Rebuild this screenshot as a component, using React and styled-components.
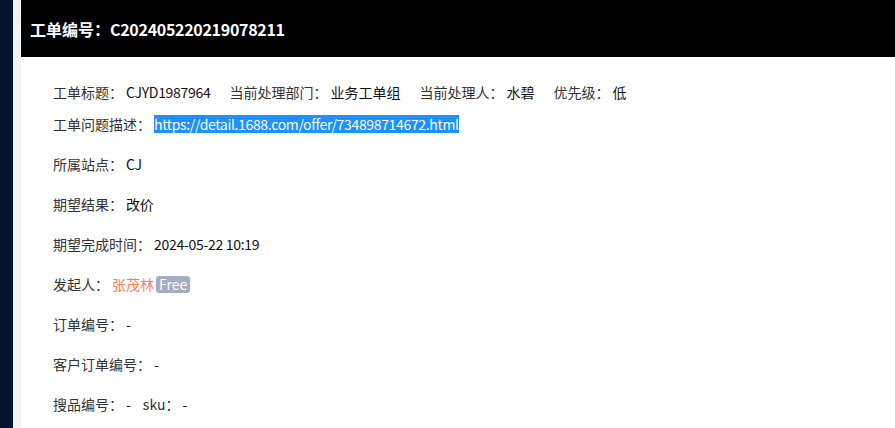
import React from 'react';
import styled, { createGlobalStyle } from 'styled-components';

const GlobalStyle = createGlobalStyle`
  html, body {
    margin: 0;
    padding: 0;
    height: 100%;
    overflow: hidden;
  }
  body {
    font-family: "Noto Sans CJK SC", "Noto Sans", sans-serif;
    font-size: 14px;
    color: #333;
  }
`;

const Layout = styled.div`
  display: flex;
  height: 100vh;
`;

const Sider = styled.div`
  width: 13px;
  flex-shrink: 0;
  background: #001529;
`;

const Main = styled.div`
  flex: 1;
  background: #f0f2f5;
  padding-left: 8px;
  display: flex;
  flex-direction: column;
`;

const Card = styled.div`
  flex: 1;
  background: #fff;
  display: flex;
  flex-direction: column;
`;

const Header = styled.div`
  height: 57px;
  background: #000;
  color: #fff;
  display: flex;
  align-items: center;
  padding-left: 9px;
  box-sizing: border-box;
  font-size: 16px;
  font-weight: 700;
`;

const Code = styled.span`
  letter-spacing: -0.3px;
`;

const Body = styled.div`
  padding: 24px 32px 0;
`;

const Row = styled.div`
  display: flex;
  align-items: center;
  height: 22px;
  line-height: 22px;
  margin-bottom: ${p => p.$gap}px;
  white-space: nowrap;
`;

const Item = styled.span`
  display: inline-flex;
  align-items: center;
  margin-right: ${p => p.$spacing || 0}px;
`;

const Label = styled.span`
  color: #333;
`;

const Value = styled.span`
  color: #111;
  margin-left: 3px;
  letter-spacing: ${p => (p.$tight ? '-0.3px' : 'normal')};
`;

const Selected = styled.span`
  display: inline-block;
  margin-left: 3px;
  height: 18px;
  line-height: 18px;
  background: #1e90ff;
  color: #fff;
  letter-spacing: -0.34px;
`;

const Person = styled.span`
  color: #f4845f;
  margin-left: 3px;
`;

const Tag = styled.span`
  display: inline-block;
  margin-left: 2px;
  padding: 0 3px;
  height: 17px;
  line-height: 17px;
  border-radius: 3px;
  background: #a4adc2;
  color: #fff;
  font-size: 14px;
`;

const rows = [
  { label: '所属站点：', value: 'CJ' },
  { label: '期望结果：', value: '改价' },
  { label: '期望完成时间：', value: '2024-05-22 10:19' },
];

const rowsAfter = [
  { label: '订单编号：', value: '-' },
  { label: '客户订单编号：', value: '-' },
];

export default function App() {
  return (
    <>
      <GlobalStyle />
      <Layout>
        <Sider />
        <Main>
          <Card>
            <Header>
              工单编号：<Code>C202405220219078211</Code>
            </Header>
            <Body>
              <Row $gap={10}>
                <Item $spacing={19}>
                  <Label>工单标题：</Label>
                  <Value $tight>CJYD1987964</Value>
                </Item>
                <Item $spacing={19}>
                  <Label>当前处理部门：</Label>
                  <Value>业务工单组</Value>
                </Item>
                <Item $spacing={19}>
                  <Label>当前处理人：</Label>
                  <Value>水碧</Value>
                </Item>
                <Item>
                  <Label>优先级：</Label>
                  <Value>低</Value>
                </Item>
              </Row>
              <Row $gap={18}>
                <Label>工单问题描述：</Label>
                <Selected>https://detail.1688.com/offer/734898714672.html</Selected>
              </Row>
              {rows.map(r => (
                <Row key={r.label} $gap={18}>
                  <Label>{r.label}</Label>
                  <Value $tight>{r.value}</Value>
                </Row>
              ))}
              <Row $gap={18}>
                <Label>发起人：</Label>
                <Person>张茂林</Person>
                <Tag>Free</Tag>
              </Row>
              {rowsAfter.map(r => (
                <Row key={r.label} $gap={18}>
                  <Label>{r.label}</Label>
                  <Value>{r.value}</Value>
                </Row>
              ))}
              <Row $gap={18}>
                <Item $spacing={12}>
                  <Label>搜品编号：</Label>
                  <Value>-</Value>
                </Item>
                <Item>
                  <Label>sku：</Label>
                  <Value>-</Value>
                </Item>
              </Row>
            </Body>
          </Card>
        </Main>
      </Layout>
    </>
  );
}
